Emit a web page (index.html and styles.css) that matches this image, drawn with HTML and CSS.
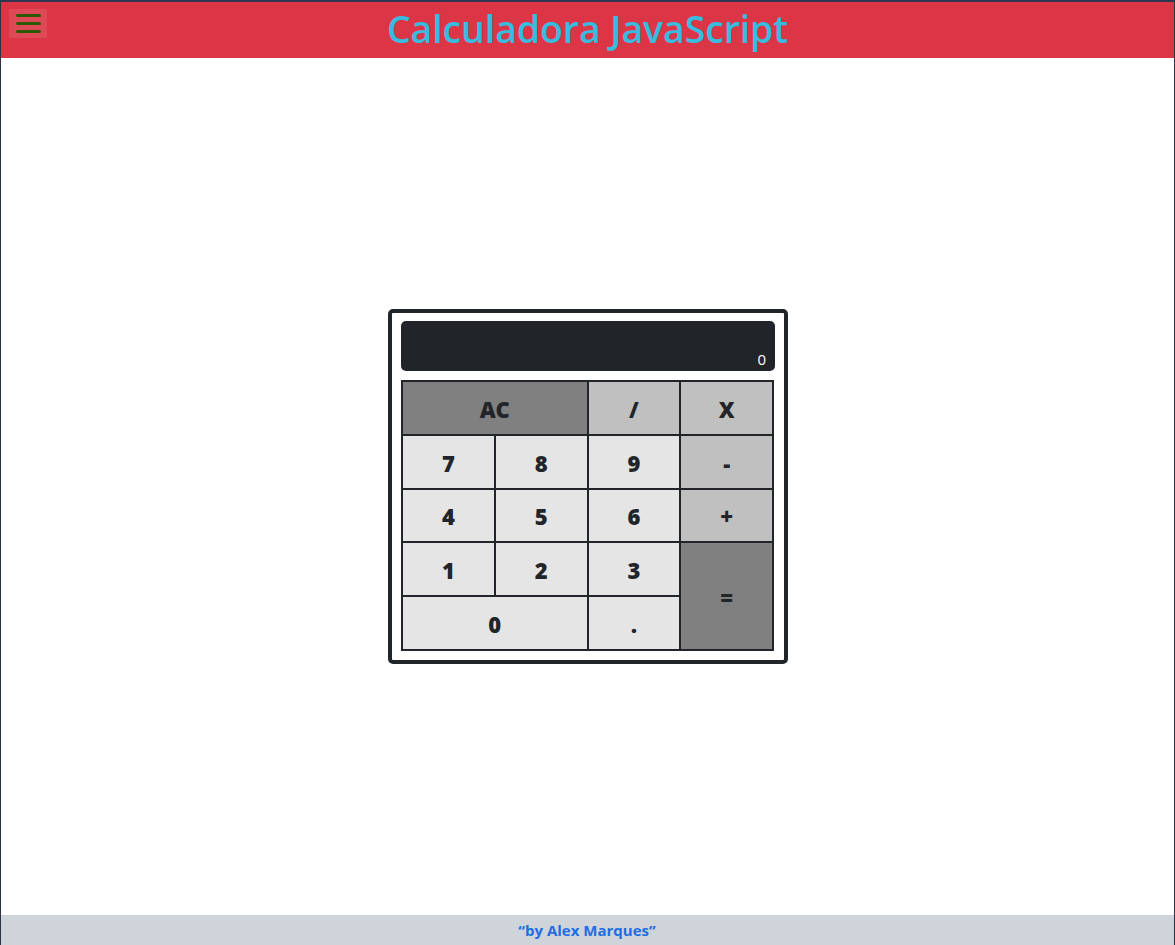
FILE: index.html
```html
<!DOCTYPE html>
<html lang="pt-BR">
<head>
<meta charset="utf-8">
<title>Calculadora JavaScript</title>
<link rel="stylesheet" href="styles.css">
</head>
<body>
<div class="page">
  <header class="topbar">
    <div class="left">
      <button class="menu-btn" aria-label="menu">
        <span class="bar"></span><span class="bar"></span><span class="bar"></span>
      </button>
    </div>
    <h1 class="title">Calculadora JavaScript</h1>
    <div class="right"></div>
  </header>
  <main class="main">
    <div class="calc">
      <div class="display">0</div>
      <div class="keys">
        <div class="key dark span2">AC</div>
        <div class="key mid">/</div>
        <div class="key mid">X</div>
        <div class="key">7</div>
        <div class="key">8</div>
        <div class="key">9</div>
        <div class="key mid">-</div>
        <div class="key">4</div>
        <div class="key">5</div>
        <div class="key">6</div>
        <div class="key mid">+</div>
        <div class="key">1</div>
        <div class="key">2</div>
        <div class="key">3</div>
        <div class="key dark rowspan2">=</div>
        <div class="key span2">0</div>
        <div class="key">.</div>
      </div>
    </div>
  </main>
  <footer class="footer">“by Alex Marques”</footer>
</div>
</body>
</html>
```
FILE: styles.css
```css
html, body {
  margin: 0;
  padding: 0;
  background: #ffffff;
}
body {
  font-family: "Open Sans", "Noto Sans", sans-serif;
}
.page {
  box-sizing: border-box;
  height: 945px;
  display: flex;
  flex-direction: column;
  border-left: 1px solid #2b3444;
  border-right: 1px solid #2b3444;
  border-top: 2px solid #2f3652;
}
.topbar {
  background: #dc3545;
  height: 56px;
  display: grid;
  grid-template-columns: 1fr auto 1fr;
  align-items: start;
}
.left {
  padding: 7px 0 0 8px;
}
.menu-btn {
  width: 38px;
  height: 29px;
  border: none;
  padding: 0;
  background: rgba(255, 255, 255, 0.1);
  display: flex;
  flex-direction: column;
  align-items: center;
  justify-content: center;
  gap: 4.5px;
}
.bar {
  display: block;
  width: 25px;
  height: 3.5px;
  border-radius: 2px;
  background: #2c5a00;
}
.title {
  margin: 0;
  padding-top: 1px;
  font-size: 37.5px;
  font-weight: 600;
  color: #38bbdf;
  line-height: 52px;
  letter-spacing: -0.1px;
}
.main {
  flex: 1;
  display: flex;
  align-items: center;
  justify-content: center;
  padding-left: 1px;
}
.calc {
  width: 374px;
  border: 4px solid #212529;
  border-radius: 5px;
  padding: 8px 9px 9px 9px;
  display: flex;
  flex-direction: column;
  gap: 9px;
}
.display {
  height: 50px;
  background: #212529;
  border-radius: 5px;
  color: #ffffff;
  font-size: 15px;
  display: flex;
  align-items: flex-end;
  justify-content: flex-end;
  padding: 0 9px 2px 0;
  box-sizing: border-box;
  line-height: 20px;
}
.keys {
  width: 373px;
  height: 271px;
  box-sizing: border-box;
  background: #212529;
  padding: 2px;
  display: grid;
  grid-template-columns: repeat(4, 1fr);
  grid-template-rows: repeat(5, 1fr);
  gap: 2px;
}
.key {
  background: #e5e5e5;
  color: #212529;
  font-weight: 800;
  font-size: 22px;
  display: flex;
  align-items: center;
  justify-content: center;
  padding-top: 2px;
}
.key.mid {
  background: #c0c0c0;
}
.key.dark {
  background: #808080;
}
.span2 {
  grid-column: span 2;
}
.rowspan2 {
  grid-row: span 2;
}
.footer {
  height: 30px;
  background: #ced4da;
  color: #1f6de0;
  font-weight: 700;
  font-size: 15px;
  display: flex;
  align-items: center;
  justify-content: center;
  padding-right: 1px;
}
```
